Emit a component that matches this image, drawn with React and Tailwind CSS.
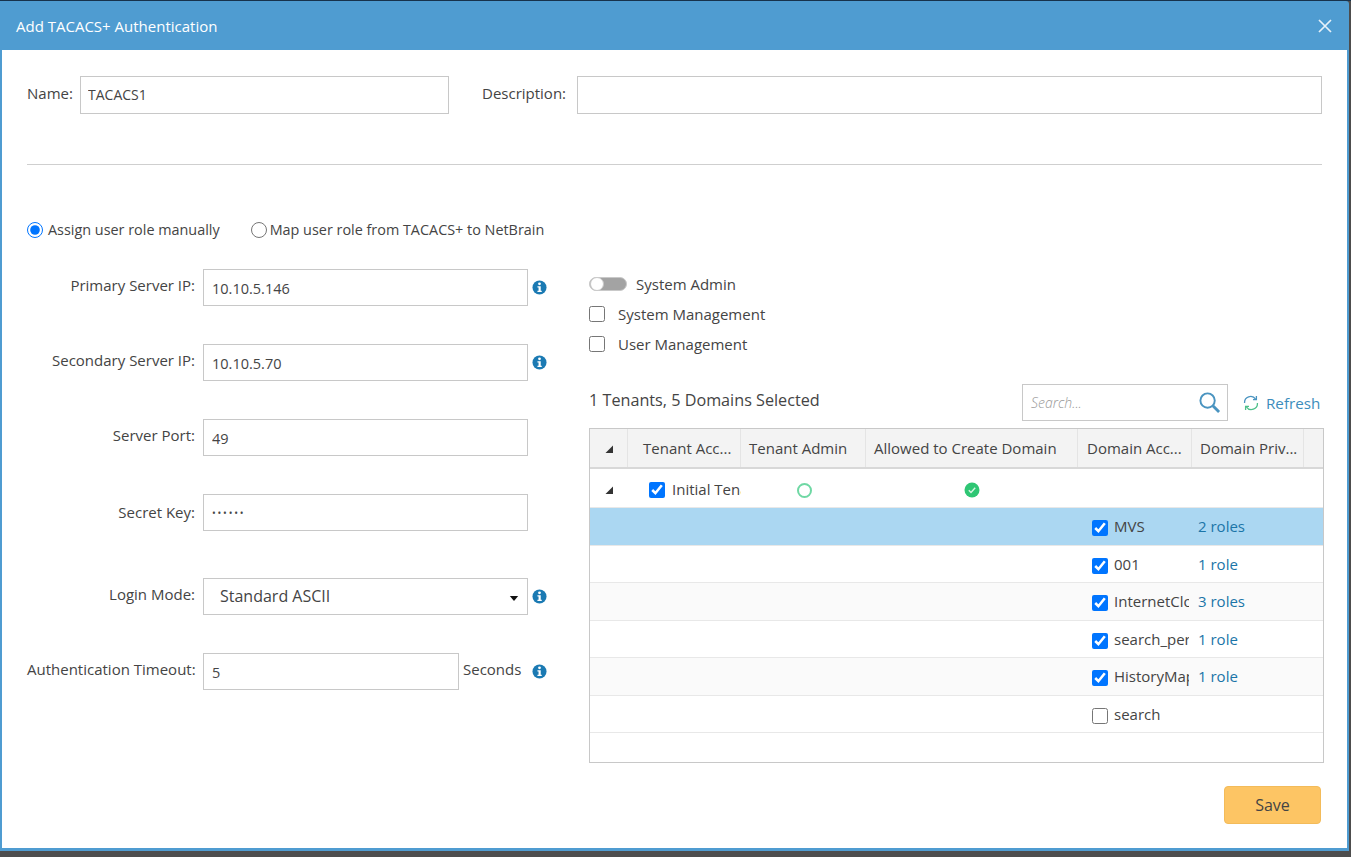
import React from "react";

const Info = () => (
  <svg viewBox="0 0 16 16" className="w-[15px] h-[15px] shrink-0">
    <circle cx="8" cy="8" r="7.5" fill="#1b7ab3" />
    <circle cx="8" cy="4.1" r="1.5" fill="#fff" />
    <path d="M5.8 6.6H9.3V11.4H10.4V12.9H5.8V11.4H7V8.1H5.8Z" fill="#fff" />
  </svg>
);

const Field = ({ label, value, type = "text", wClass = "w-[325px]", mt, extra, icon = true, labelMt = "-mt-[5px]", inputText = "text-[14.5px]" }) => (
  <div className={`flex items-center ${mt}`}>
    <label className={`w-[176px] text-right pr-[8px] ${labelMt} whitespace-nowrap`}>{label}</label>
    <input
      readOnly
      type={type}
      value={value}
      className={`${wClass} h-[37px] border border-[#c8c8c8] bg-white px-[8px] pt-[1px] ${inputText} text-[#444] outline-none`}
    />
    {extra}
    {icon && <span className="ml-[4px]"><Info /></span>}
  </div>
);

const Check = ({ checked }) => (
  <input type="checkbox" readOnly checked={checked} className="w-[16px] h-[16px] m-0 shrink-0" />
);

const cols = "grid grid-cols-[38px_113px_125px_212px_114px_112px_1fr]";

const Row = ({ h, tone = "bg-white", children }) => (
  <div className={`${cols} ${h} ${tone} border-b border-[#e8e8e8]`}>{children}</div>
);

const Domain = ({ h, tone, name, checked = true, roles, pad = "pt-[2px]" }) => (
  <Row h={h} tone={tone}>
    <div className="col-span-4" />
    <div className={`flex items-center pl-[14px] pr-[3px] ${pad} whitespace-nowrap text-[#444] min-w-0`}>
      <Check checked={checked} />
      <span className="ml-[6px] -mt-[4px] overflow-hidden">{name}</span>
    </div>
    <div className={`flex items-center pl-[6px] ${pad} text-[#1b75a8]`}>
      <span className="-mt-[4px]">{roles}</span>
    </div>
    <div />
  </Row>
);

const Tri = () => (
  <svg viewBox="0 0 8 8" className="w-[8px] h-[8px]"><path d="M8 0.5V8H0.5Z" fill="#333" /></svg>
);

const Head = ({ children, cls = "pl-[8px] pr-[2px]" }) => (
  <div className={`flex items-center border-r border-[#e4e4e4] ${cls}`}>
    <span>{children}</span>
  </div>
);

export default function App() {
  return (
    <div
      className="w-[1351px] h-[857px] overflow-hidden bg-[#4d4d4d] text-[15px] leading-[20px] text-[#444]"
      style={{ fontFamily: '"Open Sans", sans-serif' }}
    >
      <div className="h-px bg-[#17324c]" />
      <div className="w-[1349px] h-[850px] flex flex-col bg-[#4f9cd1] rounded-tr-[3px] px-[2px] pb-[3px]">
        <div className="h-[49px] flex items-center justify-between pl-[14px] pr-[15px] text-[15px] text-white shrink-0">
          <span>Add TACACS+ Authentication</span>
          <svg viewBox="0 0 14 14" className="w-[14px] h-[14px]" stroke="#e6f1f9" strokeWidth="1.7" fill="none">
            <path d="M1 1L13 13M13 1L1 13" />
          </svg>
        </div>
        <div className="flex-1 bg-white flex flex-col pl-[25px] pr-[25px] pt-[26px]">
          <div className="flex items-center">
            <label className="w-[53px] -mt-[5px]">Name:</label>
            <input readOnly value="TACACS1" className="w-[369px] h-[38px] border border-[#c8c8c8] px-[7px] pb-[1px] text-[14px] text-[#444] outline-none" />
            <label className="ml-[33px] w-[95px] -mt-[5px]">Description:</label>
            <input readOnly value="" className="flex-1 h-[38px] border border-[#c8c8c8] outline-none" />
          </div>
          <div className="mt-[50px] h-px bg-[#cfcfcf]" />
          <div className="mt-[55px] flex items-center h-[20px] text-[14.4px]">
            <input type="radio" readOnly checked name="r" className="w-[16px] h-[16px] m-0" />
            <span className="ml-[5px]">Assign user role manually</span>
            <input type="radio" readOnly name="r" className="w-[16px] h-[16px] m-0 ml-[31px]" />
            <span className="ml-[3px]">Map user role from TACACS+ to NetBrain</span>
          </div>
          <div className="flex mt-[29px]">
            <div className="w-[562px] shrink-0">
              <Field label="Primary Server IP:" value="10.10.5.146" />
              <Field label="Secondary Server IP:" value="10.10.5.70" mt="mt-[38px]" />
              <Field label="Server Port:" value="49" mt="mt-[38px]" icon={false} labelMt="-mt-[5px]" />
              <Field label="Secret Key:" value="123456" type="password" mt="mt-[38px]" icon={false} labelMt="-mt-[1px]" inputText="text-[10px] tracking-[1.8px]" />
              <div className="flex items-center mt-[47px]">
                <label className="w-[176px] text-right pr-[8px] -mt-[5px]">Login Mode:</label>
                <div className="relative w-[325px] h-[37px] border border-[#c8c8c8] flex items-center pl-[16px] pb-[2px] text-[16px]">
                  Standard ASCII
                  <svg viewBox="0 0 10 6" className="absolute right-[8px] top-[17px] w-[10px] h-[5px]"><path d="M0 0H10L5 6Z" fill="#111" /></svg>
                </div>
                <span className="ml-[4px]"><Info /></span>
              </div>
              <Field
                label="Authentication Timeout:"
                value="5"
                wClass="w-[256px]"
                mt="mt-[38px]"
                extra={<span className="ml-[4px] w-[65px] -mt-[5px]">Seconds</span>}
              />
            </div>
            <div className="flex-1 flex flex-col">
              <div className="flex items-center h-[20px] mt-[5px]">
                <span className="relative w-[38px] h-[14px] rounded-full bg-[#a3a3a3] border border-[#c9c9c9]">
                  <span className="absolute left-0 -top-px w-[14px] h-[14px] rounded-full bg-white border border-[#c9c9c9]" />
                </span>
                <span className="ml-[9px]">System Admin</span>
              </div>
              <div className="flex items-center h-[20px] mt-[10px]">
                <Check checked={false} />
                <span className="ml-[13px]">System Management</span>
              </div>
              <div className="flex items-center h-[20px] mt-[10px]">
                <Check checked={false} />
                <span className="ml-[13px]">User Management</span>
              </div>
              <div className="flex items-center mt-[30px] h-[37px]">
                <span className="text-[16.2px] -mt-[6px]">1 Tenants, 5 Domains Selected</span>
                <div className="ml-auto w-[206px] h-[37px] border border-[#c8c8c8] flex items-center justify-between pl-[8px] pr-[6px]">
                  <span className="italic text-[#999] text-[14px] font-light">Search...</span>
                  <svg viewBox="0 0 24 24" className="w-[23px] h-[23px]" fill="none" stroke="#4a94c0" strokeWidth="2">
                    <circle cx="10" cy="10" r="7.5" />
                    <path d="M15.5 15.5L22 22" strokeWidth="3" />
                  </svg>
                </div>
                <svg viewBox="0 0 16 16" className="ml-[15px] w-[16px] h-[16px]" fill="none" strokeWidth="1.3">
                  <path d="M1.6 8A6 6 0 0 1 12.6 4.2" stroke="#4a94c0" />
                  <path d="M10 4.6H13.4V1" stroke="#4a94c0" />
                  <path d="M14.4 8A6 6 0 0 1 3.4 11.8" stroke="#4ec08a" />
                  <path d="M6 11.4H2.6V15" stroke="#4ec08a" />
                </svg>
                <span className="ml-[7px] mr-[3px] w-[55px] text-[#3c8dbc] text-[15.2px]">Refresh</span>
              </div>
              <div className="mt-[7px] h-[335px] w-[735px] border border-[#c8c8c8] whitespace-nowrap">
                <div className={`${cols} h-[40px] bg-[#f3f3f3] border-b-2 border-[#d8d8d8] text-[#444]`}>
                  <div className="flex items-center justify-center pt-[1px] border-r border-[#e4e4e4]"><Tri /></div>
                  <Head cls="pl-[15px] pr-[2px]">Tenant Acc...</Head>
                  <Head>Tenant Admin</Head>
                  <Head>Allowed to Create Domain</Head>
                  <Head cls="pl-[9px] pr-[2px]">Domain Acc...</Head>
                  <Head>Domain Priv...</Head>
                  <div />
                </div>
                <Row h="h-[39px]">
                  <div className="flex items-center justify-center pt-[4px]"><Tri /></div>
                  <div className="flex items-center pl-[21px] pt-[4px] min-w-0">
                    <Check checked />
                    <span className="ml-[7px] -mt-[2px] overflow-hidden">Initial Tenant</span>
                  </div>
                  <div className="flex items-center pl-[56px] pt-[4px]">
                    <span className="w-[15px] h-[15px] rounded-full border-2 border-[#6fd8a4] bg-white" />
                  </div>
                  <div className="flex items-center pl-[98px] pt-[4px]">
                    <svg viewBox="0 0 16 16" className="w-[16px] h-[16px]">
                      <circle cx="8" cy="8" r="7.5" fill="#2fc674" />
                      <path d="M4.8 8.2L7 10.4L11.2 5.8" fill="none" stroke="#d8f5e4" strokeWidth="1.4" />
                    </svg>
                  </div>
                  <div />
                  <div />
                  <div />
                </Row>
                <Domain h="h-[38px]" tone="bg-[#abd7f2]" name="MVS" roles="2 roles" />
                <Domain h="h-[37px]" pad="pt-[4px]" name="001" roles="1 role" />
                <Domain h="h-[38px]" tone="bg-[#fafafa]" name="InternetCloud" roles="3 roles" />
                <Domain h="h-[37px]" pad="pt-[4px]" name="search_permission" roles="1 role" />
                <Domain h="h-[38px]" tone="bg-[#fafafa]" name="HistoryMap" roles="1 role" />
                <Domain h="h-[37px]" pad="pt-[4px]" name="search" checked={false} />
              </div>
              <div className="flex justify-end mt-[23px] pr-[3px]">
                <button className="w-[97px] h-[38px] rounded-[4px] bg-[#fdc564] border border-[#f3bb5a] text-[#444] text-[16px]">Save</button>
              </div>
            </div>
          </div>
        </div>
      </div>
    </div>
  );
}
